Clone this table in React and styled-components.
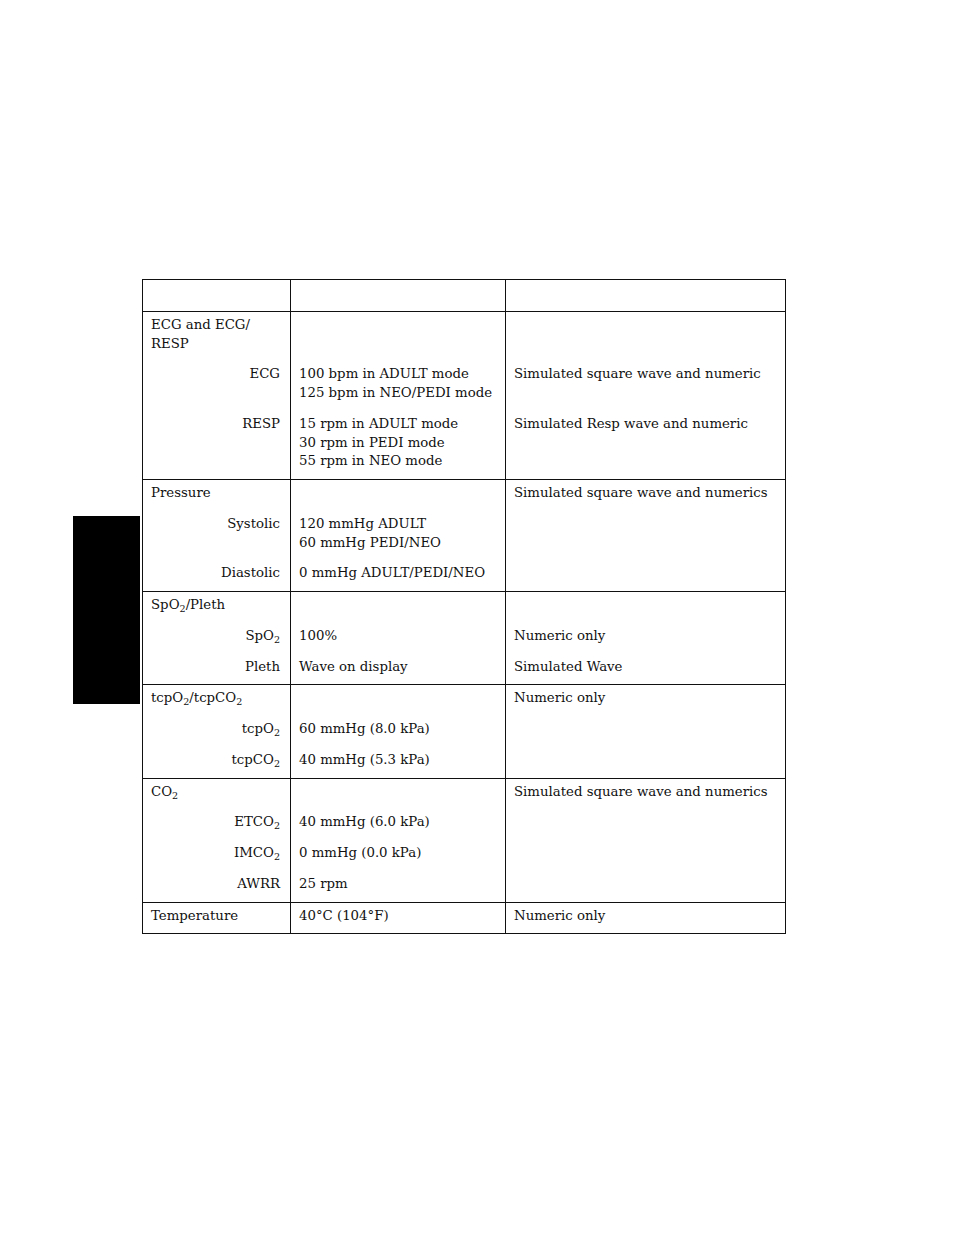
import React from 'react';
import styled, { createGlobalStyle } from 'styled-components';

const GlobalStyle = createGlobalStyle`
  html, body {
    margin: 0;
    padding: 0;
    background: #ffffff;
  }
  body {
    font-family: "DejaVu Serif", "Liberation Serif", serif;
    color: #111;
  }
`;

const Page = styled.main`
  position: relative;
  width: 954px;
  min-height: 1235px;
  padding: 279px 0 0 142px;
  box-sizing: border-box;
`;

// black thumb tab on the page edge
const ThumbTab = styled.div`
  position: absolute;
  left: 73px;
  top: 516px;
  width: 67px;
  height: 188px;
  background: #000;
`;

const Table = styled.table`
  border-collapse: collapse;
  width: 643px;
  table-layout: fixed;
  font-size: 13.3px;
  line-height: 18.75px;
  border: 1px solid #111;
`;

const Group = styled.tbody`
  border-top: 1px solid #111;
`;

const Cell = styled.td`
  vertical-align: top;
  border-left: 1px solid #111;
  border-right: 1px solid #111;
  padding: 12px 8px 0 8px;
  text-align: ${p => (p.$right ? 'right' : 'left')};
  padding-right: ${p => (p.$right ? '10px' : '8px')};
  white-space: nowrap;

  tr:first-child > & {
    padding-top: 4px;
  }
  tr:last-child > & {
    padding-bottom: 8px;
  }
`;

const Heading = styled.span`
  display: inline-block;
  white-space: normal;
  width: 110px;
`;

const Sub = styled.sub`
  font-size: 0.72em;
  line-height: 0;
  vertical-align: -0.3em;
`;

const O2 = () => <>O<Sub>2</Sub></>;

const groups = [
  [
    [<Heading>ECG and ECG/ RESP</Heading>, null, null, false],
    ['ECG', <>100 bpm in ADULT mode<br />125 bpm in NEO/PEDI mode</>, 'Simulated square wave and numeric', true],
    ['RESP', <>15 rpm in ADULT mode<br />30 rpm in PEDI mode<br />55 rpm in NEO mode</>, 'Simulated Resp wave and numeric', true],
  ],
  [
    ['Pressure', null, 'Simulated square wave and numerics', false],
    ['Systolic', <>120 mmHg ADULT<br />60 mmHg PEDI/NEO</>, null, true],
    ['Diastolic', '0 mmHg ADULT/PEDI/NEO', null, true],
  ],
  [
    [<>Sp<O2 />/Pleth</>, null, null, false],
    [<>Sp<O2 /></>, '100%', 'Numeric only', true],
    ['Pleth', 'Wave on display', 'Simulated Wave', true],
  ],
  [
    [<>tcp<O2 />/tcpC<O2 /></>, null, 'Numeric only', false],
    [<>tcp<O2 /></>, '60 mmHg (8.0 kPa)', null, true],
    [<>tcpC<O2 /></>, '40 mmHg (5.3 kPa)', null, true],
  ],
  [
    [<>C<O2 /></>, null, 'Simulated square wave and numerics', false],
    [<>ETC<O2 /></>, '40 mmHg (6.0 kPa)', null, true],
    [<>IMC<O2 /></>, '0 mmHg (0.0 kPa)', null, true],
    ['AWRR', '25 rpm', null, true],
  ],
  [
    ['Temperature', '40°C (104°F)', 'Numeric only', false],
  ],
];

export default function App() {
  return (
    <>
      <GlobalStyle />
      <Page>
        <ThumbTab />
        <Table>
          <colgroup>
            <col style={{ width: 148 }} />
            <col style={{ width: 215 }} />
            <col style={{ width: 280 }} />
          </colgroup>
          <Group>
            <tr>
              <Cell>&nbsp;</Cell>
              <Cell />
              <Cell />
            </tr>
          </Group>
          {groups.map((rows, gi) => (
            <Group key={gi}>
              {rows.map(([label, value, desc, right], ri) => (
                <tr key={ri}>
                  <Cell $right={right}>{label}</Cell>
                  <Cell>{value}</Cell>
                  <Cell>{desc}</Cell>
                </tr>
              ))}
            </Group>
          ))}
        </Table>
      </Page>
    </>
  );
}
